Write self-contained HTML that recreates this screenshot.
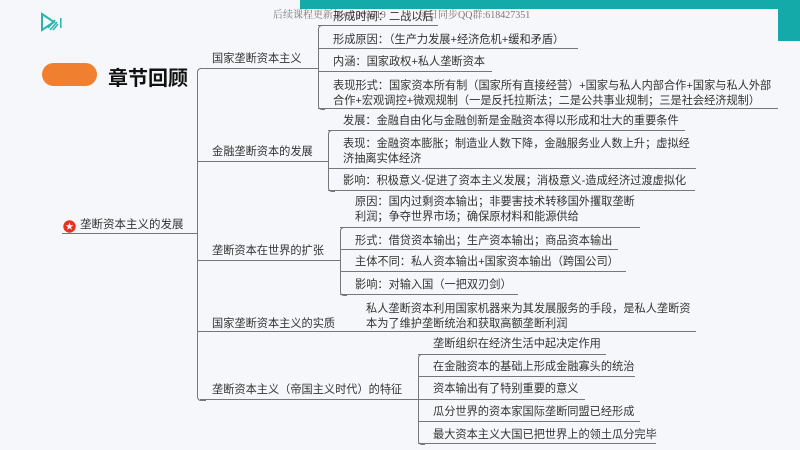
<!DOCTYPE html>
<html><head><meta charset="utf-8"><style>
body{margin:0;width:800px;height:450px;background:#f6f7fa;position:relative;overflow:hidden;font-family:"Liberation Sans","Noto Sans CJK SC",sans-serif;color:#333}
.t{position:absolute;font-size:11.2px;line-height:15px;white-space:nowrap}
.l{position:absolute;border-color:#777;border-style:solid;border-width:0}
.h{position:absolute;height:0;border-top:1px solid #777}
.wm{position:absolute;font-family:"Liberation Serif","Noto Serif CJK SC",serif;font-size:10px;color:#777;white-space:nowrap}
</style></head><body>
<div style="position:absolute;left:300px;top:0;width:478px;height:9px;background:#13aaa9"></div>
<div style="position:absolute;left:778px;top:0;width:22px;height:41px;background:#13aaa9"></div>
<div class="wm" style="left:273px;top:6px">后续课程更新加v:1003019</div>
<div class="wm" style="left:418px;top:6px">每日同步QQ群:618427351</div>
<svg style="position:absolute;left:40px;top:12px" width="24" height="20" viewBox="0 0 24 20"><path d="M2 2 L2 18 L14 10 Z" fill="none" stroke="#2bb3b0" stroke-width="2"/><path d="M8 16 L15 8 M10 18 L17 10 M13 18 L18 12" stroke="#2bb3b0" stroke-width="1.5"/><rect x="20" y="6" width="1.5" height="10" fill="#2bb3b0"/></svg>
<div style="position:absolute;left:42px;top:63px;width:55px;height:23px;border-radius:12px;background:#f07f30"></div>
<div style="position:absolute;left:108px;top:62px;font-size:20px;font-weight:bold;color:#111">章节回顾</div>

<svg style="position:absolute;left:63px;top:220px" width="13" height="13" viewBox="0 0 13 13"><circle cx="6.5" cy="6.5" r="6.2" fill="#e8321e"/><path d="M6.5 2.5 L7.5 5.3 L10.4 5.3 L8 7 L8.9 9.8 L6.5 8.1 L4.1 9.8 L5 7 L2.6 5.3 L5.5 5.3 Z" fill="#fff"/></svg>
<div class="t" style="left:80px;top:218px;font-size:11.5px">垄断资本主义的发展</div>
<div class="h" style="left:62px;top:233px;width:135px"></div>

<div class="l" style="left:197px;top:68px;width:8px;height:331px;border-left-width:1px;border-top-width:1px;border-bottom-width:1px;border-radius:4px 0 0 4px;border-right:0"></div>

<div class="t" style="left:212px;top:52px">国家垄断资本主义</div>
<div class="h" style="left:200px;top:68px;width:118px"></div>
<div class="t" style="left:212px;top:145px">金融垄断资本的发展</div>
<div class="h" style="left:198px;top:161px;width:130px"></div>
<div class="t" style="left:212px;top:244px">垄断资本在世界的扩张</div>
<div class="h" style="left:198px;top:260px;width:142px"></div>
<div class="t" style="left:212px;top:317px">国家垄断资本主义的实质</div>
<div class="h" style="left:198px;top:331px;width:498px"></div>
<div class="t" style="left:212px;top:383px">垄断资本主义（帝国主义时代）的特征</div>
<div class="h" style="left:200px;top:399px;width:218px"></div>

<div class="l" style="left:318px;top:25px;width:6px;height:83px;border-left-width:1px;border-top-width:1px;border-bottom-width:1px;border-radius:4px 0 0 4px"></div>
<div class="t" style="left:333px;top:10px">形成时间：二战以后</div><div class="h" style="left:318px;top:25px;width:120px"></div>
<div class="t" style="left:333px;top:33px">形成原因：（生产力发展+经济危机+缓和矛盾）</div><div class="h" style="left:318px;top:48px;width:260px"></div>
<div class="t" style="left:333px;top:55px">内涵：国家政权+私人垄断资本</div><div class="h" style="left:318px;top:71px;width:174px"></div>
<div class="t" style="left:333px;top:79px">表现形式：国家资本所有制（国家所有直接经营）+国家与私人内部合作+国家与私人外部<br>合作+宏观调控+微观规制（一是反托拉斯法；二是公共事业规制；三是社会经济规制）</div>
<div class="h" style="left:318px;top:108px;width:460px"></div>

<div class="l" style="left:328px;top:130px;width:6px;height:60px;border-left-width:1px;border-top-width:1px;border-bottom-width:1px;border-radius:4px 0 0 4px"></div>
<div class="t" style="left:343px;top:114px">发展：金融自由化与金融创新是金融资本得以形成和壮大的重要条件</div><div class="h" style="left:328px;top:130px;width:357px"></div>
<div class="t" style="left:343px;top:137px">表现：金融资本膨胀；制造业人数下降，金融服务业人数上升；虚拟经<br>济抽离实体经济</div><div class="h" style="left:328px;top:168px;width:368px"></div>
<div class="t" style="left:343px;top:174px">影响：积极意义-促进了资本主义发展；消极意义-造成经济过渡虚拟化</div><div class="h" style="left:328px;top:190px;width:367px"></div>

<div class="l" style="left:340px;top:227px;width:6px;height:67px;border-left-width:1px;border-top-width:1px;border-bottom-width:1px;border-radius:4px 0 0 4px"></div>
<div class="t" style="left:355px;top:195px">原因：国内过剩资本输出；非要害技术转移国外攫取垄断<br>利润；争夺世界市场；确保原材料和能源供给</div><div class="h" style="left:340px;top:227px;width:300px"></div>
<div class="t" style="left:355px;top:234px">形式：借贷资本输出；生产资本输出；商品资本输出</div><div class="h" style="left:340px;top:249px;width:278px"></div>
<div class="t" style="left:355px;top:255px">主体不同：私人资本输出+国家资本输出（跨国公司）</div><div class="h" style="left:340px;top:271px;width:286px"></div>
<div class="t" style="left:355px;top:278px">影响：对输入国（一把双刃剑）</div><div class="h" style="left:340px;top:294px;width:178px"></div>

<div class="t" style="left:366px;top:302px">私人垄断资本利用国家机器来为其发展服务的手段，是私人垄断资<br>本为了维护垄断统治和获取高额垄断利润</div>

<div class="l" style="left:418px;top:354px;width:6px;height:89px;border-left-width:1px;border-top-width:1px;border-bottom-width:1px;border-radius:4px 0 0 4px"></div>
<div class="t" style="left:433px;top:337px">垄断组织在经济生活中起决定作用</div><div class="h" style="left:418px;top:354px;width:188px"></div>
<div class="t" style="left:433px;top:360px">在金融资本的基础上形成金融寡头的统治</div><div class="h" style="left:418px;top:376px;width:217px"></div>
<div class="t" style="left:433px;top:382px">资本输出有了特别重要的意义</div><div class="h" style="left:418px;top:399px;width:167px"></div>
<div class="t" style="left:433px;top:405px">瓜分世界的资本家国际垄断同盟已经形成</div><div class="h" style="left:418px;top:421px;width:222px"></div>
<div class="t" style="left:433px;top:428px">最大资本主义大国已把世界上的领土瓜分完毕</div><div class="h" style="left:418px;top:443px;width:238px"></div>
</body></html>
